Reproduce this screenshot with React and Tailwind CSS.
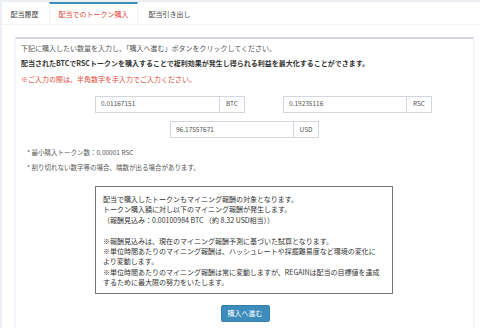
const font = { fontFamily: '"Noto Sans CJK JP", "Noto Sans", sans-serif' };

const tabs = ['配当履歴', '配当でのトークン購入', '配当引き出し'];

const CoinInput = ({ value, unit, inputW, className = '' }) => (
  <div className={`flex h-[17px] ${className}`}>
    <div
      className={`${inputW} flex items-center pl-[5px] border border-[#d2d6de] text-[6.5px] text-[#555]`}
    >
      {value}
    </div>
    <div className="w-[25px] flex items-center justify-center border border-l-0 border-[#d2d6de] text-[6.5px] text-[#555]">
      {unit}
    </div>
  </div>
);

const App = () => {
  const activeTab = 1;

  return (
    <div
      className="w-[480px] h-[328px] overflow-hidden bg-[#ecf0f5] pt-[2px] pl-[2px]"
      style={font}
    >
      <div className="bg-white h-full">
        {/* Tabs */}
        <div className="flex h-[23px] border-b border-[#f4f4f4]">
          {tabs.map((t, i) => (
            <div
              key={t}
              className={`px-[8.5px] mr-[2px] flex items-center text-[7px] border-t-2 ${
                i === activeTab
                  ? 'border-[#3c8dbc] bg-white text-[#dd4b39] border-x border-x-[#f4f4f4]'
                  : 'border-transparent text-[#444]'
              }`}
            >
              {t}
            </div>
          ))}
        </div>

        {/* Box */}
        <div className="pl-[12.5px] pt-[11.5px]">
          <div className="w-[459px] h-[300px] border-t-[2px] border-[#d2d6de] shadow-[0_1px_1px_rgba(0,0,0,0.1)] border-x border-x-[#f4f4f4]">
            <div className="pl-[5.5px] pt-[4px] text-[7px] leading-[10px]">
              <p className="text-[#555] mb-[5.5px]">
                下記に購入したい数量を入力し、「購入へ進む」ボタンをクリックしてください。
              </p>
              <p className="text-[#333] font-bold mb-[5.5px]">
                配当されたBTCでRSCトークンを購入することで複利効果が発生し得られる利益を最大化することができます。
              </p>
              <p className="text-[#dd4b39]">※ご入力の際は、半角数字を手入力でご入力ください。</p>
            </div>

            {/* Inputs */}
            <div className="flex mt-[12px] ml-[79.5px] gap-[38px]">
              <CoinInput value="0.01167151" unit="BTC" inputW="w-[125px]" />
              <CoinInput value="0.19235116" unit="RSC" inputW="w-[124px]" />
            </div>
            <div className="flex mt-[8.5px] ml-[154.5px]">
              <CoinInput value="96.17557671" unit="USD" inputW="w-[124px]" />
            </div>

            {/* Notes */}
            <div className="ml-[11.5px] mt-[9px] text-[6.5px] leading-[10px] text-[#555]">
              <p className="mb-[5px]">* 最小購入トークン数：0.00001 RSC</p>
              <p>* 割り切れない数字等の場合、端数が出る場合があります。</p>
            </div>

            {/* Info */}
            <div className="ml-[79.5px] mt-[14px] w-[298px] h-[108px] border border-[#777] pl-[7px] pt-[7px] text-[7px] leading-[10.4px] text-[#333]">
              <p>配当で購入したトークンもマイニング報酬の対象となります。</p>
              <p>トークン購入額に対し以下のマイニング報酬が発生します。</p>
              <p>（報酬見込み：0.00100984 BTC （約 8.32 USD相当））</p>
              <p className="h-[10.4px]"></p>
              <p>※報酬見込みは、現在のマイニング報酬予測に基づいた試算となります。</p>
              <p>
                ※単位時間あたりのマイニング報酬は、ハッシュレートや採掘難易度など環境の変化に
                <br />
                より変動します。
              </p>
              <p>
                ※単位時間あたりのマイニング報酬は常に変動しますが、REGAINは配当の目標値を達成
                <br />
                するために最大限の努力をいたします。
              </p>
            </div>

            {/* Button */}
            <div className="flex justify-center mt-[11px] pl-[2px]">
              <button className="w-[49px] h-[17px] bg-[#3c8dbc] border border-[#367fa9] rounded-[2px] text-white text-[7px] flex items-center justify-center">
                購入へ進む
              </button>
            </div>
          </div>
        </div>
      </div>
    </div>
  );
};

export default App;
